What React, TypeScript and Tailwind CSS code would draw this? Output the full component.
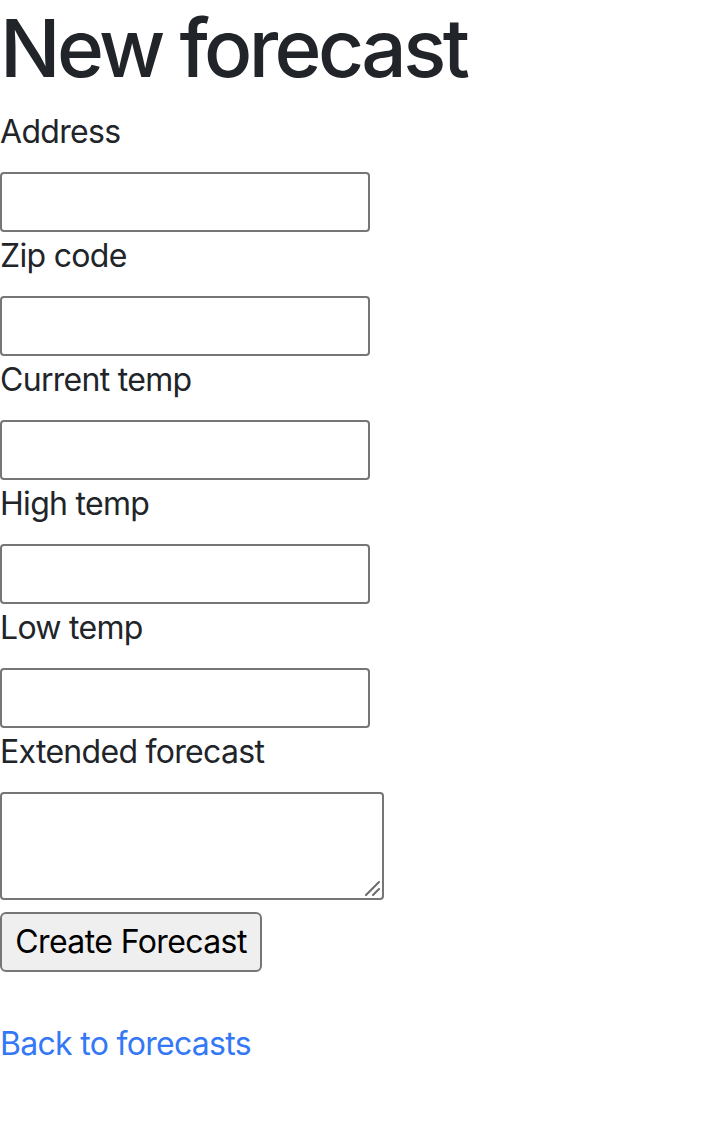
export default function App() {
  const fields = ["Address", "Zip code", "Current temp", "High temp", "Low temp"]

  return (
    <div className="min-h-screen bg-white font-['Inter','Noto_Sans',sans-serif] text-[#212529]">
      <h1 className="mb-[12px] text-[80px] font-medium leading-[96px] tracking-[-3.6px]">New forecast</h1>

      <form>
        {fields.map((label) => (
          <div key={label}>
            <label className="mb-4 block text-[32px] leading-[48px] tracking-[-0.7px]">{label}</label>
            <input
              type="text"
              className="block h-[60px] w-[370px] rounded-[4px] border-2 border-[#767676] bg-white"
            />
          </div>
        ))}

        <div>
          <label className="mb-4 block text-[32px] leading-[48px] tracking-[-0.7px]">Extended forecast</label>
          <div className="relative w-[384px]">
            <textarea className="block h-[108px] w-[384px] resize-none rounded-[4px] border-2 border-[#767676] bg-white" />
            <svg className="absolute bottom-[4px] right-[4px]" width="16" height="16" viewBox="0 0 16 16">
              <path d="M2 15 L15 2 M9 15 L15 9" stroke="#6b6b6b" strokeWidth="2" strokeLinecap="round" />
            </svg>
          </div>
        </div>

        <div className="mt-[12px]">
          <button
            type="submit"
            className="flex h-[60px] w-[262px] items-center justify-center rounded-[6px] border-2 border-[#767676] bg-[#efefef] text-[32px] leading-[48px] tracking-[-0.6px] text-black"
          >
            Create Forecast
          </button>
        </div>
      </form>

      <div className="mt-[48px]">
        <a href="#" className="text-[32px] leading-[48px] tracking-[-0.7px] text-[#3478f6]">
          Back to forecasts
        </a>
      </div>
    </div>
  )
}
